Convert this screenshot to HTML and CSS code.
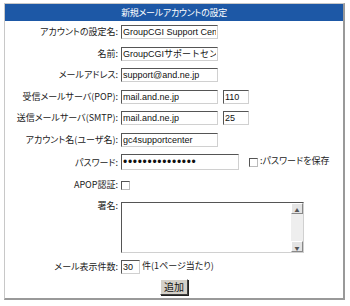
FILE: index.html
```html
<!DOCTYPE html>
<html lang="ja">
<head>
    <meta charset="UTF-8">
    <meta name="viewport" content="width=device-width, initial-scale=1.0">
    <title>新規メールアカウントの設定</title>
    <link rel="stylesheet" href="styles.css">
</head>
<body>

    <div class="account-box">
        <div class="box-title">新規メールアカウントの設定</div>

        <table class="account-form">
            <tr class="row">
                <th>アカウントの設定名:</th>
                <td><input type="text" class="field" value="GroupCGI Support Center"></td>
            </tr>
            <tr class="row">
                <th>名前:</th>
                <td><input type="text" class="field" value="GroupCGIサポートセンター"></td>
            </tr>
            <tr class="row">
                <th>メールアドレス:</th>
                <td><input type="text" class="field" value="support@and.ne.jp"></td>
            </tr>
            <tr class="row">
                <th>受信メールサーバ(POP):</th>
                <td><input type="text" class="field" value="mail.and.ne.jp"><input type="text" class="port" value="110"></td>
            </tr>
            <tr class="row">
                <th>送信メールサーバ(SMTP):</th>
                <td><input type="text" class="field" value="mail.and.ne.jp"><input type="text" class="port" value="25"></td>
            </tr>
            <tr class="row">
                <th>アカウント名(ユーザ名):</th>
                <td><input type="text" class="field" value="gc4supportcenter"></td>
            </tr>
            <tr class="row row-pass">
                <th>パスワード:</th>
                <td class="nowrap">
                    <input type="password" class="field pass" value="gc4supportcente">
                    <span class="save-pass"><span class="check"></span>:パスワードを保存</span>
                </td>
            </tr>
            <tr class="row">
                <th>APOP認証:</th>
                <td><span class="check"></span></td>
            </tr>
            <tr class="row-sign">
                <th>署名:</th>
                <td>
                    <div class="sign">
                        <div class="sign-text"></div>
                        <div class="scroll">
                            <span class="arrow">▲</span>
                            <span class="arrow">▼</span>
                        </div>
                    </div>
                </td>
            </tr>
            <tr class="row">
                <th>メール表示件数:</th>
                <td><input type="text" class="count" value="30"> 件(1ページ当たり)</td>
            </tr>
            <tr class="row-submit">
                <td colspan="2"><button type="button" class="submit">追加</button></td>
            </tr>
        </table>
    </div>

</body>
</html>
```

FILE: styles.css
```css
body {
    margin: 3px 0 0 4px;
    font-family: "Noto Sans CJK JP", sans-serif;
    font-size: 9px;
    font-feature-settings: "palt";
    color: #222;
    background: #fff;
}

.account-box {
    width: 341px;
    height: 297px;
    border: 1px solid #c8c8c8;
    border-right: 2px solid #999;
    border-bottom: 2px solid #999;
    box-sizing: border-box;
}

.box-title {
    height: 17px;
    line-height: 17px;
    background-color: #1d58a6;
    color: #fff;
    text-align: center;
    font-size: 9px;
    letter-spacing: -0.3px;
}

.account-form {
    border-collapse: collapse;
    width: 100%;
}

.account-form th {
    width: 113px;
    padding: 0 3px 0 0;
    text-align: right;
    font-weight: normal;
    white-space: nowrap;
}

.account-form td {
    padding: 0;
}

.nowrap {
    white-space: nowrap;
}

.row {
    height: 21.5px;
}

.row-pass {
    height: 24px;
}

.row-sign {
    height: 60px;
}

.row-sign th {
    vertical-align: top;
    padding-top: 3px;
}

.row-sign .sign {
    margin-top: 3px;
}

.row-submit td {
    text-align: center;
    height: 22px;
    vertical-align: top;
}

input {
    font-family: "Liberation Sans", "Noto Sans CJK JP", sans-serif;
    font-size: 9px;
    color: #111;
    height: 14px;
    padding: 0 1px;
    box-sizing: border-box;
    border: 1px solid;
    border-color: #555 #d0d0d0 #d0d0d0 #555;
    vertical-align: middle;
    margin: 0;
}

.field {
    width: 97px;
}

.pass {
    width: 118px;
    height: 16px;
    font-size: 12px;
    letter-spacing: 0.7px;
}

.port {
    width: 26px;
    margin-left: 5px;
}

.count {
    width: 19px;
}

.check {
    display: inline-block;
    width: 9px;
    height: 9px;
    border: 1px solid #555;
    border-right-color: #bbb;
    border-bottom-color: #bbb;
    vertical-align: middle;
    box-sizing: border-box;
}

.save-pass {
    margin-left: 8px;
}

.save-pass .check {
    margin-right: 2px;
}

.sign {
    width: 183px;
    height: 51px;
    border: 1px solid;
    border-color: #555 #d0d0d0 #d0d0d0 #555;
    box-sizing: border-box;
    display: flex;
}

.sign-text {
    flex: 1;
}

.scroll {
    width: 12px;
    background: #eeeeee;
    display: flex;
    flex-direction: column;
    justify-content: space-between;
}

.arrow {
    display: block;
    height: 11px;
    line-height: 11px;
    font-size: 5px;
    text-align: center;
    color: #555;
    background: #e4e4e4;
    border: 1px solid;
    border-color: #fff #888 #888 #fff;
    box-sizing: border-box;
}

.submit {
    font-family: "Noto Sans CJK JP", sans-serif;
    font-size: 10px;
    height: 16px;
    line-height: 12px;
    padding: 0 3px;
    background: #d4d0c8;
    border: 1px solid;
    border-color: #fff #404040 #404040 #fff;
    box-shadow: 1px 1px 0 #222;
    color: #111;
    margin-top: 2px;
}
```
